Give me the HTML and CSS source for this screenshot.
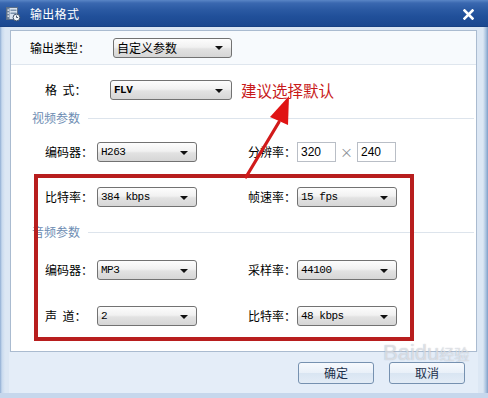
FILE: index.html
```html
<!DOCTYPE html>
<html lang="zh">
<head>
<meta charset="utf-8">
<title>输出格式</title>
<link rel="stylesheet" href="styles.css">
</head>
<body>
<div class="win">
  <div class="titlebar">
    <svg class="ticon" width="16" height="16" viewBox="0 0 16 16">
      <rect x="1.5" y="1.5" width="11" height="12" fill="#d7e2ef" stroke="#5c6f88"/>
      <rect x="2" y="2" width="2.5" height="11" fill="#6a7f99"/>
      <rect x="2.5" y="3.5" width="1.5" height="1.2" fill="#fff"/>
      <rect x="2.5" y="6.5" width="1.5" height="1.2" fill="#fff"/>
      <rect x="2.5" y="9.5" width="1.5" height="1.2" fill="#fff"/>
      <rect x="5.5" y="3.5" width="6" height="1.5" fill="#7d93ad"/>
      <rect x="5.5" y="6.5" width="6" height="1.5" fill="#7d93ad"/>
      <circle cx="11.5" cy="11.5" r="3.4" fill="#eef3f8" stroke="#44566e"/>
      <path d="M11.5 9.6v1.9h1.6" stroke="#44566e" fill="none"/>
    </svg>
    <span class="ttext">输出格式</span>
    <span class="close">
      <svg width="11" height="11" viewBox="0 0 11 11"><path d="M1.5 1.5l8 8M9.5 1.5l-8 8" stroke="#fff" stroke-width="2.6" stroke-linecap="square"/></svg>
    </span>
  </div>
  <div class="frame">
    <div class="panel">
      <div class="toprow">
        <span class="lbl lbl-top">输出类型：</span>
        <div class="dd dd-top"><span class="val cjk">自定义参数</span><span class="tri"></span></div>
      </div>
      <div class="body">
        <div class="row row-fmt">
          <span class="lbl lbl-fmt">格&nbsp;&nbsp;式：</span>
          <div class="dd dd-fmt"><span class="val bold">FLV</span><span class="tri"></span></div>
          <span class="hint">建议选择默认</span>
        </div>
        <div class="group g1"><span class="gtxt">视频参数</span><span class="gline"></span></div>
        <div class="row r1">
          <span class="lbl">编码器：</span>
          <div class="dd"><span class="val">H263</span><span class="tri"></span></div>
          <span class="lbl lbl-r">分辨率：</span>
          <span class="inp">320</span><span class="times">×</span><span class="inp">240</span>
        </div>
        <div class="row r2">
          <span class="lbl">比特率：</span>
          <div class="dd"><span class="val">384 kbps</span><span class="tri"></span></div>
          <span class="lbl lbl-r">帧速率：</span>
          <div class="dd"><span class="val">15 fps</span><span class="tri"></span></div>
        </div>
        <div class="group g2"><span class="gtxt">音频参数</span><span class="gline"></span></div>
        <div class="row r3">
          <span class="lbl">编码器：</span>
          <div class="dd"><span class="val">MP3</span><span class="tri"></span></div>
          <span class="lbl lbl-r">采样率：</span>
          <div class="dd"><span class="val">44100</span><span class="tri"></span></div>
        </div>
        <div class="row r4">
          <span class="lbl">声&nbsp;&nbsp;道：</span>
          <div class="dd"><span class="val">2</span><span class="tri"></span></div>
          <span class="lbl lbl-r">比特率：</span>
          <div class="dd"><span class="val">48 kbps</span><span class="tri"></span></div>
        </div>
      </div>
    </div>
    <div class="footer">
      <button class="btn">确定</button>
      <button class="btn">取消</button>
    </div>
  </div>
  <div class="redbox"></div>
  <svg class="arrow" width="60" height="100" viewBox="0 0 60 100">
    <path d="M3 85 L36 30" stroke="#d11a1a" stroke-width="3.2" stroke-linecap="round"/>
    <path d="M46 4 L27 25 L45 33 Z" fill="#e01414"/>
  </svg>
  <div class="wm"><span class="wm1">Bai</span><span class="wm2">du</span><span class="wm3">经验</span></div>
</div>
</body>
</html>
```

FILE: styles.css
```css
* { box-sizing: border-box; }
html, body { margin: 0; padding: 0; background: #fff; }
body {
  font-family: "Noto Sans CJK SC", "Liberation Sans", sans-serif;
  font-size: 12px;
  color: #000;
}
.win {
  position: relative;
  width: 488px;
  height: 398px;
  background: #d9e5f3;
  display: flex;
  flex-direction: column;
  overflow: hidden;
}
.titlebar {
  height: 27px;
  flex: none;
  display: flex;
  align-items: center;
  padding: 0 14px 0 5px;
  background: linear-gradient(#5a86c6 0, #3a68b0 3px, #2c5ba4 9px, #21509a 16px, #1b4890 26px, #163b78 27px);
  color: #fff;
}
.ticon { flex: none; margin-right: 9px; margin-top: 1px; }
.ttext { font-size: 12px; line-height: 14px; letter-spacing: 0.3px; flex: 1; margin-top: 1px; }
.close { display: flex; margin-top: 2px; }
.frame {
  flex: 1;
  display: flex;
  flex-direction: column;
  padding: 3px 11px 0 10px;
  background: linear-gradient(90deg, #8fadd3 0, #c9daee 2px, #dce7f4 5px, #dce7f4 calc(100% - 5px), #a9c1de calc(100% - 2px), #7f9ec6 100%);
  border-bottom: 5px solid #c6d7ec;
}
.panel {
  height: 322px;
  flex: none;
  border: 1px solid #aabbd0;
  background: #fff;
  display: flex;
  flex-direction: column;
}
.toprow {
  height: 34px;
  flex: none;
  display: flex;
  align-items: center;
  padding-left: 19px;
  background: #f7fafd;
  border-bottom: 1px solid #dfe6ee;
}
.lbl { font-size: 12px; line-height: 16px; white-space: nowrap; }
.lbl-top { width: 83px; }
.body {
  display: flex;
  flex-direction: column;
  padding-left: 34px;
}
.row { display: flex; align-items: center; height: 20px; }
.row .lbl { width: 52px; }
.row .lbl-r { width: 49px; margin-left: 51px; }
.row-fmt { margin-top: 15px; }
.row-fmt .lbl-fmt { width: 65px; }
.r1 { margin-top: 16px; }
.r2 { margin-top: 25px; }
.r3 { margin-top: 20px; }
.r4 { margin-top: 26px; }
.group {
  display: flex;
  align-items: center;
  height: 16px;
  margin-left: -13px;
  margin-right: 2px;
}
.g1 { margin-top: 10px; }
.g2 { margin-top: 17px; }
.gtxt { color: #6d8db3; font-size: 12px; line-height: 16px; margin-right: 8px; }
.gline { flex: 1; height: 1px; background: #dde4ec; }
.dd {
  width: 100px;
  height: 20px;
  border: 1px solid #727272;
  border-radius: 3px;
  background: linear-gradient(#fdfdfd 0, #f1f1f1 45%, #e2e2e2 55%, #d6d6d6 100%);
  display: flex;
  align-items: center;
  justify-content: space-between;
  padding: 0 8px 0 3px;
  flex: none;
}
.dd-top { width: 119px; }
.dd-fmt { width: 122px; }
.val {
  font-family: "Liberation Mono", "DejaVu Sans Mono", monospace;
  font-size: 11px;
  letter-spacing: -0.5px;
  line-height: 14px;
  white-space: pre;
}
.val.cjk { font-family: "Noto Sans CJK SC", sans-serif; font-size: 12px; letter-spacing: 0; }
.val.bold { font-weight: bold; font-family: "Liberation Mono", monospace; }
.tri {
  width: 0; height: 0;
  border-left: 4px solid transparent;
  border-right: 4px solid transparent;
  border-top: 4px solid #111;
  margin-top: 1px;
}
.hint {
  margin-left: 9px;
  color: #c81a1a;
  font-size: 15.5px;
  line-height: 18px;
  white-space: nowrap;
}
.inp {
  width: 39px;
  height: 20px;
  border: 1px solid #b9bec6;
  background: #fff;
  padding-left: 3px;
  font-family: "Liberation Sans", Arial, sans-serif;
  font-size: 12px;
  line-height: 18px;
  flex: none;
}
.times { width: 21px; text-align: center; color: #8a8f96; font-size: 13px; line-height: 16px; }
.footer {
  flex: 1;
  display: flex;
  justify-content: flex-end;
  align-items: flex-start;
  padding: 10px 13px 0 0;
  gap: 15px;
  background: #e4edf8;
  margin: 0 -1px;
}
.btn {
  width: 76px;
  height: 22px;
  border: 1px solid #7691b0;
  border-radius: 3px;
  background: linear-gradient(#f6f9fd 0, #e9f0f8 50%, #d9e5f2 51%, #e3ecf6 100%);
  font-family: "Noto Sans CJK SC", sans-serif;
  font-size: 12px;
  color: #1c2f4a;
  padding: 0;
  line-height: 20px;
}
.redbox {
  position: absolute;
  left: 34px;
  top: 174px;
  width: 380px;
  height: 167px;
  border: 4px solid #b81e1e;
  pointer-events: none;
}
.arrow {
  position: absolute;
  left: 243px;
  top: 92px;
}
.wm {
  position: absolute;
  left: 383px;
  top: 340px;
  font-family: "Liberation Sans", sans-serif;
  font-size: 22px;
  line-height: 26px;
  color: rgba(255,255,255,0.55);
  text-shadow: 0 0 1px rgba(120,130,150,0.6);
  white-space: nowrap;
}
.wm3 { font-family: "Noto Sans CJK SC", sans-serif; font-size: 15px; }
```
